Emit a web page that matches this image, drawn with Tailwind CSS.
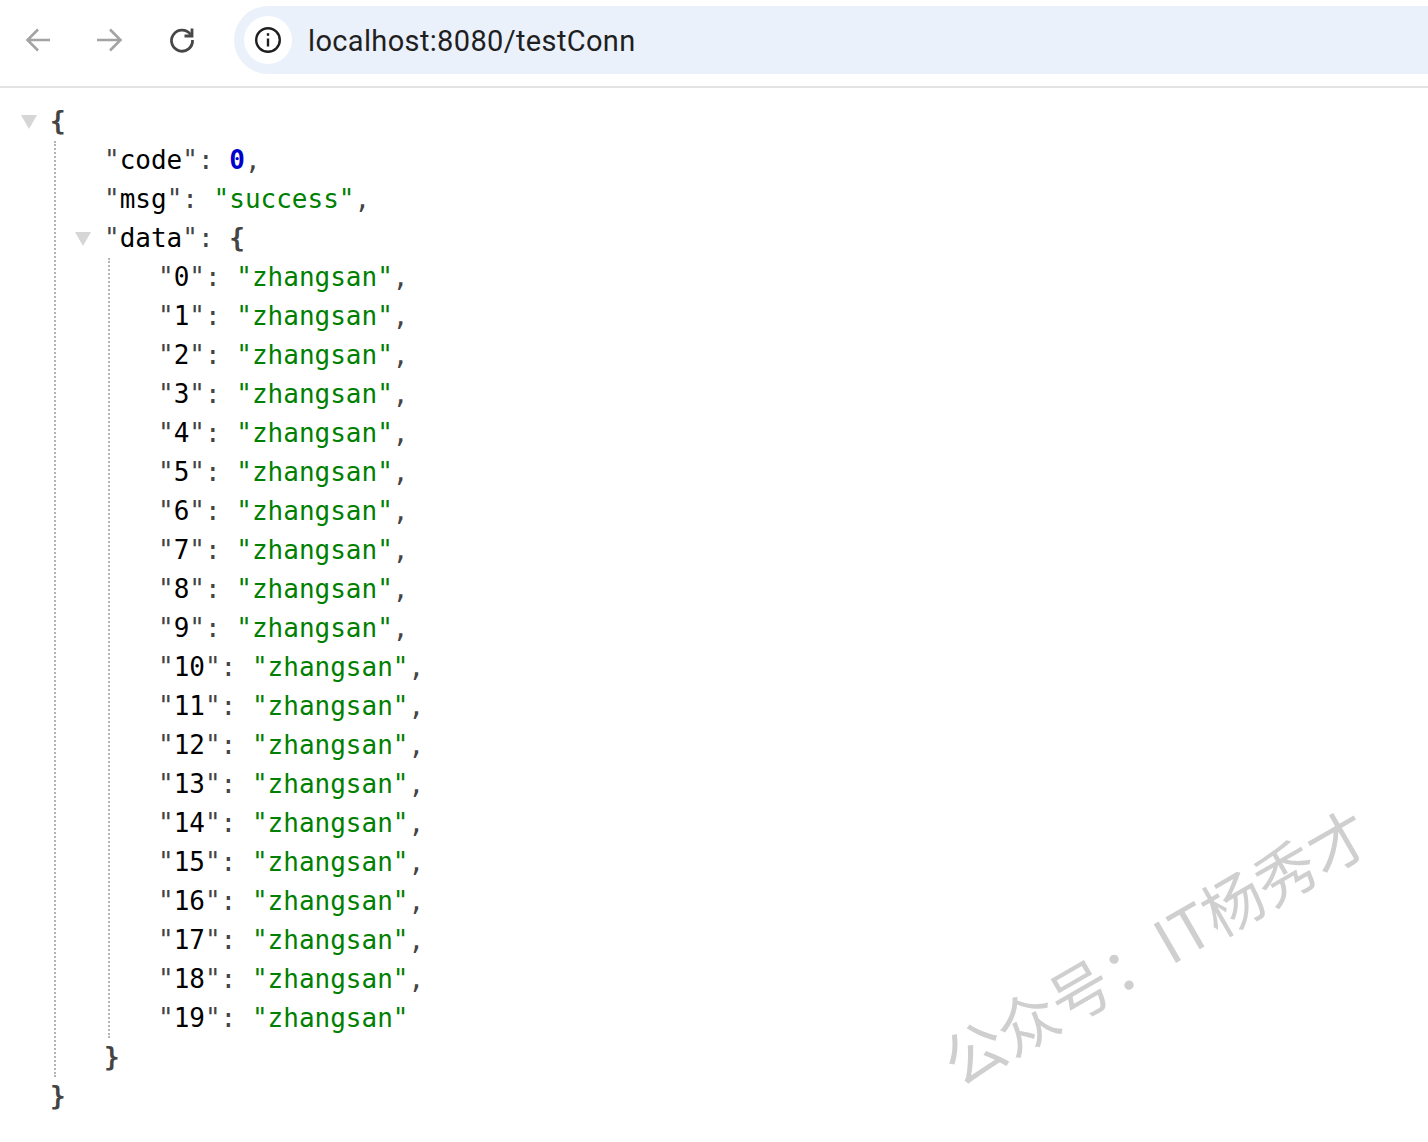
<!DOCTYPE html>
<html lang="en">
<head>
  <meta charset="UTF-8" />
  <title>localhost:8080/testConn</title>
  <script src="https://cdn.jsdelivr.net/npm/@tailwindcss/browser@4"></script>
</head>
<body class="bg-white w-[1428px] h-[1142px] overflow-hidden relative">
  <!-- browser toolbar -->
  <header class="h-[88px] border-b-2 border-[#e3e3e3] flex items-start pt-[6px] overflow-hidden">
    <div class="w-[234px] h-[68px] shrink-0 flex items-center pl-[24px] gap-[42px]">
      <svg class="w-[30px] h-[30px]" viewBox="0 0 30 30" fill="none" stroke="#a3a3a3" stroke-width="2.6"><path d="M26 15H4M14 4.500 3.500 15 14 25.500"/></svg>
      <svg class="w-[30px] h-[30px] ml-[-2px]" viewBox="0 0 30 30" fill="none" stroke="#a3a3a3" stroke-width="2.6"><path d="M3 15H26M16 4.500 26.500 15 16 25.500"/></svg>
      <svg class="w-[30px] h-[30px] ml-[1px]" viewBox="0 0 30 30" fill="none" stroke="#474747" stroke-width="2.800"><path d="M23.500 9.500A10.500 10.500 0 1 0 25.500 15"/><path d="M25 3.500V11H17.500" /></svg>
    </div>
    <div class="flex-1 h-[68px] bg-[#eaf1fb] rounded-l-[34px] flex items-center pl-[10px]">
      <div class="w-[48px] h-[48px] rounded-full bg-white flex items-center justify-center">
        <svg class="w-[28px] h-[28px]" viewBox="0 0 28 28" fill="none" stroke="#1f1f1f" stroke-width="2.400"><circle cx="14" cy="14" r="11.800"/><path d="M14 12.500V20.500"/><path d="M14 7.200V9.800"/></svg>
      </div>
      <span class="ml-[16px] pt-[3px] text-[29px] tracking-[0.35px] text-[#1f1f1f] font-['Roboto',sans-serif]">localhost:8080/testConn</span>
    </div>
  </header>

  <!-- json viewer -->
  <main class="relative pt-[14px] pl-[50px] font-['DejaVu_Sans_Mono',monospace] text-[26px] leading-[39px] text-[#444]">
    <svg class="absolute left-[21px] top-[27px] w-[16px] h-[14px]" viewBox="0 0 16 14"><path d="M0 0H16L8 14Z" fill="#d6d6d6"/></svg>
    <div class="font-bold">{</div>
    <div class="ml-[4px] pl-[48px] border-l-2 border-dotted border-[#b5b5b5]">
      <div>"<span class="text-black">code</span>": <span class="text-[#0000cc] font-bold">0</span>,</div>
      <div>"<span class="text-black">msg</span>": <span class="text-[#008000]">"success"</span>,</div>
      <div class="relative">
        <svg class="absolute left-[-29px] top-[13px] w-[16px] h-[14px]" viewBox="0 0 16 14"><path d="M0 0H16L8 14Z" fill="#d6d6d6"/></svg>"<span class="text-black">data</span>": <span class="font-bold">{</span>
      </div>
      <div class="ml-[4px] pl-[48px] border-l-2 border-dotted border-[#b5b5b5]">
        <div>"<span class="text-black">0</span>": <span class="text-[#008000]">"zhangsan"</span>,</div>
        <div>"<span class="text-black">1</span>": <span class="text-[#008000]">"zhangsan"</span>,</div>
        <div>"<span class="text-black">2</span>": <span class="text-[#008000]">"zhangsan"</span>,</div>
        <div>"<span class="text-black">3</span>": <span class="text-[#008000]">"zhangsan"</span>,</div>
        <div>"<span class="text-black">4</span>": <span class="text-[#008000]">"zhangsan"</span>,</div>
        <div>"<span class="text-black">5</span>": <span class="text-[#008000]">"zhangsan"</span>,</div>
        <div>"<span class="text-black">6</span>": <span class="text-[#008000]">"zhangsan"</span>,</div>
        <div>"<span class="text-black">7</span>": <span class="text-[#008000]">"zhangsan"</span>,</div>
        <div>"<span class="text-black">8</span>": <span class="text-[#008000]">"zhangsan"</span>,</div>
        <div>"<span class="text-black">9</span>": <span class="text-[#008000]">"zhangsan"</span>,</div>
        <div>"<span class="text-black">10</span>": <span class="text-[#008000]">"zhangsan"</span>,</div>
        <div>"<span class="text-black">11</span>": <span class="text-[#008000]">"zhangsan"</span>,</div>
        <div>"<span class="text-black">12</span>": <span class="text-[#008000]">"zhangsan"</span>,</div>
        <div>"<span class="text-black">13</span>": <span class="text-[#008000]">"zhangsan"</span>,</div>
        <div>"<span class="text-black">14</span>": <span class="text-[#008000]">"zhangsan"</span>,</div>
        <div>"<span class="text-black">15</span>": <span class="text-[#008000]">"zhangsan"</span>,</div>
        <div>"<span class="text-black">16</span>": <span class="text-[#008000]">"zhangsan"</span>,</div>
        <div>"<span class="text-black">17</span>": <span class="text-[#008000]">"zhangsan"</span>,</div>
        <div>"<span class="text-black">18</span>": <span class="text-[#008000]">"zhangsan"</span>,</div>
        <div>"<span class="text-black">19</span>": <span class="text-[#008000]">"zhangsan"</span></div>
      </div>
      <div class="font-bold">}</div>
    </div>
    <div class="font-bold">}</div>
  </main>

  <!-- watermark -->
  <div class="absolute left-[915px] top-[913px] w-[470px] text-center text-[61px] leading-[70px] font-normal text-[#cfcfcf] whitespace-nowrap rotate-[-30deg] font-['Noto_Sans_CJK_SC',sans-serif]">公众号：IT杨秀才</div>
</body>
</html>
